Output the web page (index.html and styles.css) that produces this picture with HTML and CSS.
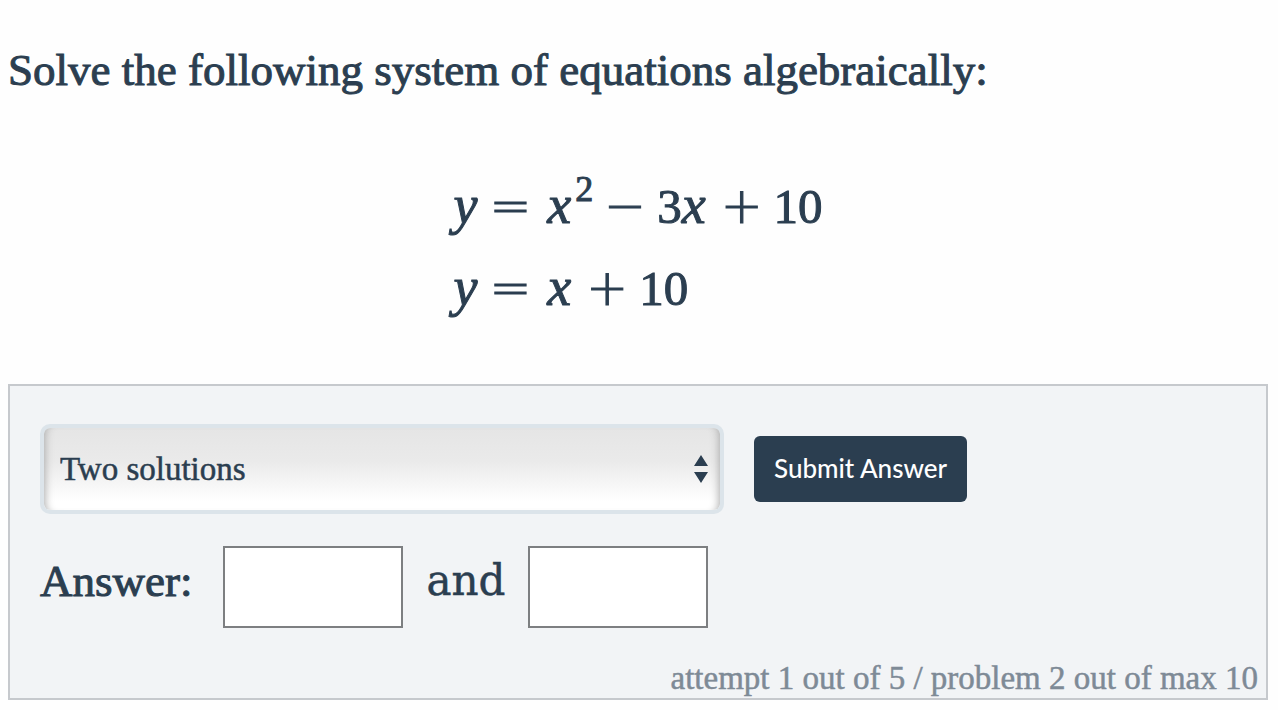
FILE: index.html
```html
<!DOCTYPE html>
<html lang="en">
<head>
<meta charset="utf-8">
<meta name="viewport" content="width=device-width, initial-scale=1">
<title>System of equations</title>
<link rel="stylesheet" href="styles.css">
</head>
<body>
<main class="problem">
  <h1 class="prompt">Solve the following system of equations algebraically:</h1>
  <div class="equations">
    <div class="equation"><i>y</i><span class="op rel">=</span><i>x</i><sup>2</sup><span class="op">−</span><span>3</span><i>x</i><span class="op">+</span><span>10</span></div>
    <div class="equation"><i>y</i><span class="op rel">=</span><i>x</i><span class="op">+</span><span>10</span></div>
  </div>
  <form class="panel">
    <div class="row">
      <div class="picker">
        <select class="select" aria-label="Number of solutions">
          <option>Two solutions</option>
          <option>One solution</option>
          <option>No solutions</option>
        </select>
        <svg class="arrows" viewBox="0 0 14 28" aria-hidden="true"><path d="M7 0l7 11H0zM0 17h14L7 28z"/></svg>
      </div>
      <button class="submit" type="button">Submit Answer</button>
    </div>
    <div class="row answers">
      <label class="label lead" for="first">Answer:</label>
      <input class="box" id="first" type="text">
      <label class="label and" for="second">and</label>
      <input class="box" id="second" type="text">
    </div>
    <p class="status">attempt 1 out of 5 / problem 2 out of max 10</p>
  </form>
</main>
</body>
</html>
```
FILE: styles.css
```css
* { box-sizing: border-box; }
body {
  margin: 0;
  background: #fefefe;
  color: #2b3e50;
  font-family: Georgia, "Liberation Serif", serif;
}
.problem { padding: 40px 10px 10px 8px; }
.prompt {
  margin: 0;
  font-size: 45px;
  line-height: 60px;
  font-weight: 400;
  -webkit-text-stroke: 1px;
}
.equations {
  width: fit-content;
  margin: 64px auto 56px;
  font-family: "Liberation Serif", serif;
  font-size: 49px;
  -webkit-text-stroke: 1px;
}
.equation {
  display: flex;
  align-items: baseline;
  height: 82px;
  line-height: 82px;
}
.equation i { width: 28px; font-size: 54px; }
.equation sup { font-size: 36px; line-height: 1; position: relative; top: -22px; vertical-align: baseline; }
.op {
  font-family: "DejaVu Sans Light", "DejaVu Sans", sans-serif;
  font-weight: 200;
  font-size: 50px;
  margin: 0 11px;
}
.rel { margin: 0 16px 0 8px; }
.panel {
  display: flex;
  flex-direction: column;
  padding: 38px 8px 0 30px;
  border: 2px solid #c6c9cd;
  background: #f2f4f6;
}
.row { display: flex; align-items: center; gap: 30px; }
.picker { position: relative; flex: 0 1 684px; }
.select {
  appearance: none;
  display: block;
  width: 100%;
  height: 90px;
  padding: 0 60px 0 16px;
  border: 4px solid #dce4ea;
  border-radius: 10px;
  background: linear-gradient(#e5e5e5, #eaeaea 40%, #fff 90%);
  box-shadow: inset 9px 0 8px -8px #aaa, inset -9px 0 8px -8px #aaa;
  color: inherit;
  font: 33px/40px Georgia, "Liberation Serif", serif;
  -webkit-text-stroke: 0.5px;
}
.arrows {
  position: absolute;
  right: 16px;
  top: 31px;
  width: 14px;
  height: 28px;
  fill: #2b3e50;
  pointer-events: none;
}
.submit {
  height: 66px;
  padding: 0 20px 2px;
  border: 0;
  border-radius: 6px;
  background: #2b3e50;
  color: #fff;
  font: 500 26px/32px Lato, sans-serif;
}
.answers { margin-top: 32px; gap: 23px; }
.label { font-size: 45px; line-height: 60px; margin-bottom: 12px; -webkit-text-stroke: 1px; }
.lead { margin-right: 8px; }
.and { font-family: "DejaVu Serif", serif; font-size: 42px; -webkit-text-stroke: 0.5px; }
.box {
  width: 180px;
  height: 82px;
  padding: 0 12px;
  border: 2px solid #7d7f81;
  background: #fff;
  color: inherit;
  font: inherit;
  font-size: 33px;
}
.status {
  margin: 30px 0 0;
  align-self: flex-end;
  color: #7e8a96;
  font-size: 33px;
  line-height: 40px;
  -webkit-text-stroke: 0.5px;
}
```
